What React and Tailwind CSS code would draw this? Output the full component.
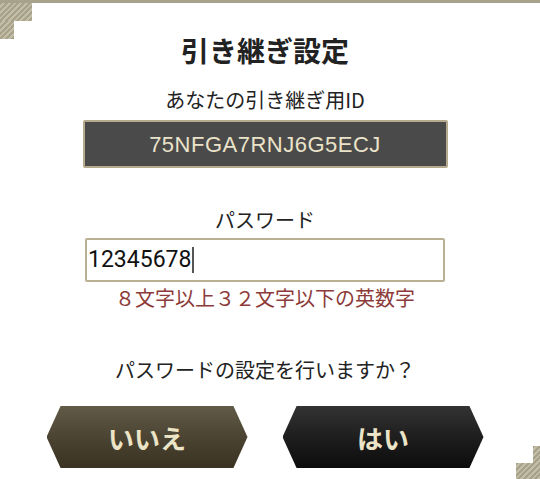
import React from 'react'

const jp = { fontFamily: '"Noto Sans CJK JP", "Noto Sans", sans-serif' }

function Corner({ flip }) {
  const stripe =
    'bg-[repeating-linear-gradient(135deg,#a9a28a_0px,#a9a28a_2px,#c3bea8_2px,#c3bea8_4px)]'
  if (flip) {
    return (
      <div className="absolute bottom-0 right-0 flex flex-col items-end">
        <div className={`h-[17px] w-[7px] ${stripe}`} />
        <div className={`h-[16px] w-[24px] ${stripe}`} />
      </div>
    )
  }
  return (
    <div className="absolute left-0 top-[3px] flex flex-col items-start">
      <div className={`h-[18px] w-[32px] ${stripe}`} />
      <div className={`h-[18px] w-[14px] ${stripe}`} />
    </div>
  )
}

function HexButton({ label, tone }) {
  const bg =
    tone === 'brown'
      ? 'bg-[linear-gradient(180deg,#615a47_0%,#4b4432_50%,#3a3222_100%)]'
      : 'bg-[linear-gradient(180deg,#333333_0%,#1e1e1e_50%,#0c0c0c_100%)]'
  return (
    <button
      type="button"
      className={`flex h-[62px] w-[201px] items-center justify-center ${bg} [clip-path:polygon(7%_0,93%_0,100%_50%,93%_100%,7%_100%,0_50%)] text-[26px] font-bold text-[#ece4c6]`}
      style={jp}
    >
      {label}
    </button>
  )
}

export default function App() {
  return (
    <div className="relative h-[479px] w-[540px] overflow-hidden bg-white" style={jp}>
      <div className="h-[3px] w-full bg-[#a8a28d]" />
      <Corner />
      <Corner flip />

      <div className="flex flex-col items-center pr-[10px]">
        <h1 className="mt-[30px] text-[28px] font-bold leading-[34px] text-[#222]">引き継ぎ設定</h1>
        <p className="mt-[21px] text-[20px] leading-[24px] text-[#222]">あなたの引き継ぎ用ID</p>

        <div className="mt-[8px] flex h-[48px] w-[365px] items-center justify-center rounded-[2px] border-2 border-[#b5ab8c] bg-[#4a4a4a]">
          <span
            className="text-[22px] tracking-[0.5px] text-[#ebe3c9]"
            style={{ fontFamily: '"Liberation Sans", Arial, sans-serif' }}
          >
            75NFGA7RNJ6G5ECJ
          </span>
        </div>

        <p className="mt-[40px] text-[20px] leading-[24px] text-[#222]">パスワード</p>

        <div className="mt-[6px] flex h-[44px] w-[360px] items-center rounded-[2px] border-2 border-[#b9af92] bg-white px-[1px]">
          <span
            className="text-[23px] text-[#111]"
            style={{ fontFamily: 'Roboto, "Liberation Sans", sans-serif' }}
          >
            12345678
          </span>
          <span className="ml-[1px] h-[26px] w-[2px] bg-[#555]" />
        </div>

        <p className="mt-[4px] text-[20px] leading-[24px] text-[#8c3b3a]">８文字以上３２文字以下の英数字</p>

        <p className="mt-[48px] text-[20px] leading-[24px] text-[#222]">パスワードの設定を行いますか？</p>

        <div className="mt-[24px] flex gap-[35px]">
          <HexButton label="いいえ" tone="brown" />
          <HexButton label="はい" tone="black" />
        </div>
      </div>
    </div>
  )
}
